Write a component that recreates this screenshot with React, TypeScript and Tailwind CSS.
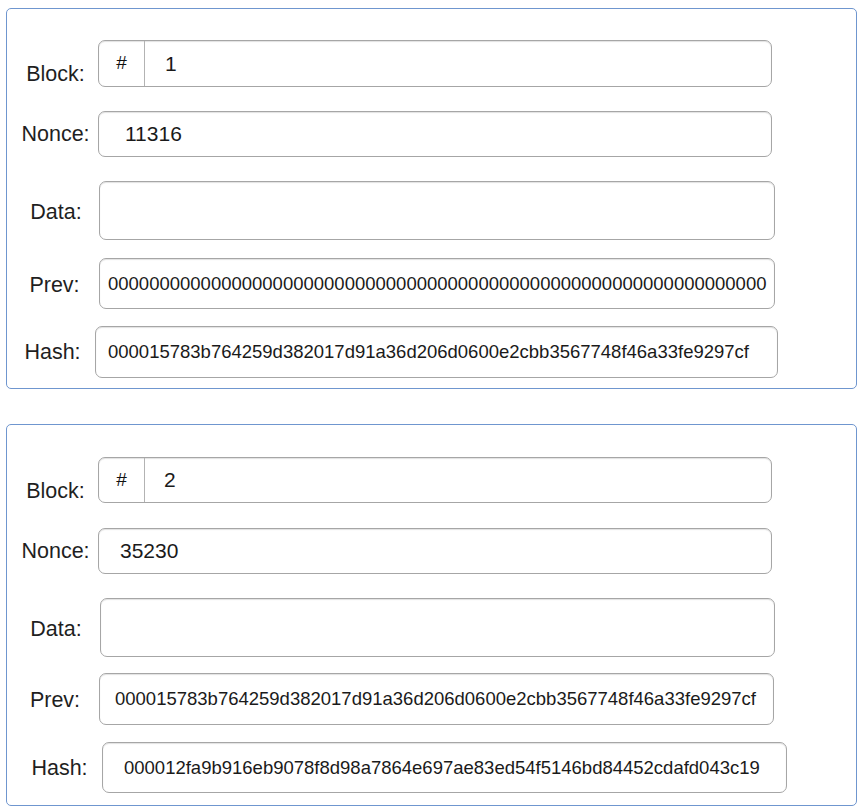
import React from "react";

type Row = {
  label: string;
  value?: string;
  block?: boolean;
  rowClass: string;
  labelClass: string;
  boxClass: string;
  textClass: string;
};

const blocks: { id: number; cardClass: string; rows: Row[] }[] = [
  {
    id: 1,
    cardClass: "h-[381px] pt-[31px]",
    rows: [
      {
        label: "Block:",
        value: "1",
        block: true,
        rowClass: "items-start",
        labelClass: "w-[85px] mt-[18px]",
        boxClass: "w-[674px] h-[47px]",
        textClass: "pl-[20px] text-[21px]",
      },
      {
        label: "Nonce:",
        value: "11316",
        rowClass: "items-center mt-[21px]",
        labelClass: "w-[85px]",
        boxClass: "w-[674px] h-[46px]",
        textClass: "pl-[26px] text-[21px]",
      },
      {
        label: "Data:",
        value: "",
        rowClass: "items-center mt-[24px]",
        labelClass: "w-[86px] pt-[3px]",
        boxClass: "w-[676px] h-[59px]",
        textClass: "pl-[12px] text-[21px]",
      },
      {
        label: "Prev:",
        value: "0".repeat(64),
        rowClass: "items-center mt-[18px]",
        labelClass: "w-[83px] pt-[3px]",
        boxClass: "w-[676px] h-[51px] ml-[3px]",
        textClass: "pl-[8px] text-[18.5px]",
      },
      {
        label: "Hash:",
        value: "000015783b764259d382017d91a36d206d0600e2cbb3567748f46a33fe9297cf",
        rowClass: "items-center mt-[17px]",
        labelClass: "w-[79px]",
        boxClass: "w-[683px] h-[52px] ml-[3px]",
        textClass: "pl-[12px] text-[18.5px]",
      },
    ],
  },
  {
    id: 2,
    cardClass: "h-[382px] pt-[32px] mt-[35px]",
    rows: [
      {
        label: "Block:",
        value: "2",
        block: true,
        rowClass: "items-start",
        labelClass: "w-[85px] mt-[18px]",
        boxClass: "w-[674px] h-[46px]",
        textClass: "pl-[19px] text-[21px]",
      },
      {
        label: "Nonce:",
        value: "35230",
        rowClass: "items-center mt-[21px]",
        labelClass: "w-[85px]",
        boxClass: "w-[674px] h-[46px]",
        textClass: "pl-[21px] text-[21px]",
      },
      {
        label: "Data:",
        value: "",
        rowClass: "items-center mt-[24px]",
        labelClass: "w-[86px] pt-[3px]",
        boxClass: "w-[675px] h-[59px] ml-[1px]",
        textClass: "pl-[12px] text-[21px]",
      },
      {
        label: "Prev:",
        value: "000015783b764259d382017d91a36d206d0600e2cbb3567748f46a33fe9297cf",
        rowClass: "items-center mt-[16px]",
        labelClass: "w-[84px] pt-[2px]",
        boxClass: "w-[675px] h-[52px] ml-[2px]",
        textClass: "pl-[15px] text-[18.5px]",
      },
      {
        label: "Hash:",
        value: "000012fa9b916eb9078f8d98a7864e697ae83ed54f5146bd84452cdafd043c19",
        rowClass: "items-center mt-[17px]",
        labelClass: "w-[89px] pl-[4px]",
        boxClass: "w-[685px] h-[51px]",
        textClass: "pl-[21px] text-[18.5px]",
      },
    ],
  },
];

const BlockCard = ({ card }: { card: (typeof blocks)[number] }) => (
  <div
    className={`w-[851px] rounded-[5px] border border-[#6f96cf] pl-[6px] ${card.cardClass}`}
  >
    {card.rows.map((row) => (
      <div key={row.label} className={`flex ${row.rowClass}`}>
        <label
          className={`shrink-0 text-center text-[21.5px] leading-[32px] text-[#1f1f1f] ${row.labelClass}`}
        >
          {row.label}
        </label>
        <div
          className={`flex shrink-0 items-stretch overflow-hidden rounded-[7px] border border-[#a6a6a6] bg-white shadow-[inset_0_1px_1px_rgba(0,0,0,0.12)] ${row.boxClass}`}
        >
          {row.block && (
            <span className="flex w-[46px] shrink-0 items-center justify-center border-r border-[#b3b3b3] text-[19px] font-medium text-[#111]">
              #
            </span>
          )}
          <input
            readOnly
            defaultValue={row.value}
            className={`min-w-0 flex-1 bg-transparent text-[#1a1a1a] outline-none ${row.textClass}`}
          />
        </div>
      </div>
    ))}
  </div>
);

export default function App() {
  return (
    <div
      className="min-h-screen bg-white pl-[6px] pt-[8px]"
      style={{ fontFamily: '"Liberation Sans", Arial, sans-serif' }}
    >
      {blocks.map((card) => (
        <BlockCard key={card.id} card={card} />
      ))}
    </div>
  );
}
